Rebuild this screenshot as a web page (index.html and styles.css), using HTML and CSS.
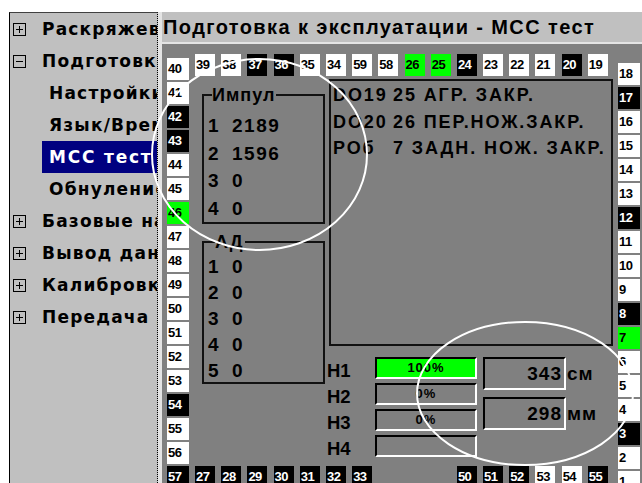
FILE: index.html
```html
<!DOCTYPE html>
<html lang="ru">
<head>
<meta charset="utf-8">
<title>Подготовка к эксплуатации - МСС тест</title>
<link rel="stylesheet" href="styles.css">
</head>
<body>
<div class="app">
  <nav class="tree">
    <div class="node"><svg class="tog" viewBox="0 0 13 13"><rect x=".5" y=".5" width="12" height="12" fill="none" stroke="#000"/><rect x="3" y="6" width="7" height="1"/><rect x="6" y="3" width="1" height="7"/></svg><span class="lbl">Раскряжевка</span></div>
    <div class="node"><svg class="tog" viewBox="0 0 13 13"><rect x=".5" y=".5" width="12" height="12" fill="none" stroke="#000"/><rect x="3" y="6" width="7" height="1"/></svg><span class="lbl">Подготовка к эксплуатации</span></div>
    <div class="node sub"><span class="lbl">Настройки</span></div>
    <div class="node sub"><span class="lbl">Язык/Время</span></div>
    <div class="node sub sel"><span class="lbl">МСС тест</span></div>
    <div class="node sub"><span class="lbl">Обнуление</span></div>
    <div class="node"><svg class="tog" viewBox="0 0 13 13"><rect x=".5" y=".5" width="12" height="12" fill="none" stroke="#000"/><rect x="3" y="6" width="7" height="1"/><rect x="6" y="3" width="1" height="7"/></svg><span class="lbl">Базовые настройки</span></div>
    <div class="node"><svg class="tog" viewBox="0 0 13 13"><rect x=".5" y=".5" width="12" height="12" fill="none" stroke="#000"/><rect x="3" y="6" width="7" height="1"/><rect x="6" y="3" width="1" height="7"/></svg><span class="lbl">Вывод данных</span></div>
    <div class="node"><svg class="tog" viewBox="0 0 13 13"><rect x=".5" y=".5" width="12" height="12" fill="none" stroke="#000"/><rect x="3" y="6" width="7" height="1"/><rect x="6" y="3" width="1" height="7"/></svg><span class="lbl">Калибровка</span></div>
    <div class="node"><svg class="tog" viewBox="0 0 13 13"><rect x=".5" y=".5" width="12" height="12" fill="none" stroke="#000"/><rect x="3" y="6" width="7" height="1"/><rect x="6" y="3" width="1" height="7"/></svg><span class="lbl">Передача данных</span></div>
  </nav>
  <div class="split"></div>
  <main class="main">
    <header class="title">Подготовка к эксплуатации - МСС тест</header>
    <section class="screen">
      <div class="col col-left">
        <span class="t">40</span><span class="t">41</span><span class="t k">42</span><span class="t k">43</span><span class="t">44</span><span class="t">45</span><span class="t g">46</span><span class="t">47</span><span class="t">48</span><span class="t">49</span><span class="t">50</span><span class="t">51</span><span class="t">52</span><span class="t">53</span><span class="t k">54</span><span class="t">55</span><span class="t">56</span><span class="t k">57</span>
      </div>
      <div class="mid">
        <div class="row row-top">
          <span class="t">39</span><span class="t">38</span><span class="t k">37</span><span class="t k">36</span><span class="t">35</span><span class="t">34</span><span class="t">59</span><span class="t">58</span><span class="t g">26</span><span class="t g">25</span><span class="t k">24</span><span class="t">23</span><span class="t">22</span><span class="t">21</span><span class="t k">20</span><span class="t">19</span>
        </div>
        <div class="body">
          <div class="groups">
            <fieldset class="grp grp-imp">
              <legend>Импул</legend>
              <div class="val"><span>1</span><span>2189</span></div>
              <div class="val"><span>2</span><span>1596</span></div>
              <div class="val"><span>3</span><span>0</span></div>
              <div class="val"><span>4</span><span>0</span></div>
            </fieldset>
            <fieldset class="grp grp-ad">
              <legend>АД</legend>
              <div class="val"><span>1</span><span>0</span></div>
              <div class="val"><span>2</span><span>0</span></div>
              <div class="val"><span>3</span><span>0</span></div>
              <div class="val"><span>4</span><span>0</span></div>
              <div class="val"><span>5</span><span>0</span></div>
            </fieldset>
          </div>
          <div class="side">
            <div class="msgs">
              <div class="msg"><span>DO19</span><span>25 АГР. ЗАКР.</span></div>
              <div class="msg"><span>DO20</span><span>26 ПЕР.НОЖ.ЗАКР.</span></div>
              <div class="msg"><span>РОб</span><span>7 ЗАДН. НОЖ. ЗАКР.</span></div>
            </div>
            <div class="levels">
              <div class="bars">
                <span class="hl">H1</span><span class="bar on">100%</span>
                <span class="hl">H2</span><span class="bar">0%</span>
                <span class="hl">H3</span><span class="bar">0%</span>
                <span class="hl">H4</span><span class="bar"></span>
              </div>
              <div class="reads">
                <div class="read"><span class="box">343</span><span class="unit">см</span></div>
                <div class="read"><span class="box">298</span><span class="unit">мм</span></div>
              </div>
            </div>
          </div>
        </div>
        <div class="row row-bottom">
          <span class="t k">27</span><span class="t k">28</span><span class="t k">29</span><span class="t k">30</span><span class="t k">31</span><span class="t k">32</span><span class="t k">33</span><span class="t k c11">50</span><span class="t k">51</span><span class="t k">52</span><span class="t">53</span><span class="t">54</span><span class="t k">55</span>
        </div>
      </div>
      <div class="col col-right">
        <span class="t">18</span><span class="t k">17</span><span class="t">16</span><span class="t">15</span><span class="t">14</span><span class="t">13</span><span class="t k">12</span><span class="t">11</span><span class="t">10</span><span class="t">9</span><span class="t k">8</span><span class="t g">7</span><span class="t">6</span><span class="t">5</span><span class="t">4</span><span class="t k">3</span><span class="t">2</span><span class="t">1</span>
      </div>
    </section>
  </main>
  <svg class="marks" viewBox="0 0 642 483">
    <ellipse cx="259.5" cy="154.5" rx="107.5" ry="95.5"/>
    <ellipse cx="525" cy="393.5" rx="108" ry="71.5"/>
  </svg>
</div>
</body>
</html>
```

FILE: styles.css
```css
* { box-sizing: border-box; }

html, body {
  margin: 0;
  height: 100%;
  overflow: hidden;
  background: #fff;
}

body {
  font-family: "Liberation Sans", Arial, sans-serif;
  font-weight: bold;
  color: #000;
}

.app {
  position: relative;
  display: flex;
  height: 100vh;
  padding: 12px 0 0 9px;
}

/* navigation tree */
.tree {
  flex: none;
  width: 149px;
  background: #c0c0c0;
  border-left: 1px solid #000;
  border-top: 1px solid #404040;
  border-right: 1px dotted #000;
  overflow: hidden;
}

.node {
  display: flex;
  align-items: center;
  height: 32px;
  white-space: nowrap;
  font-family: "DejaVu Sans", "Liberation Sans", sans-serif;
  font-size: 17px;
  letter-spacing: 1.2px;
}

.tog {
  flex: none;
  width: 13px;
  height: 13px;
  margin: 0 16px 0 3px;
}

.node.sub { padding-left: 32px; }

.node .lbl { display: block; }

.node.sub .lbl {
  padding-left: 7px;
  line-height: 32px;
  flex: 1;
}

.node.sel .lbl {
  background: #000080;
  color: #fff;
  letter-spacing: 1.8px;
}

.split {
  flex: none;
  width: 4px;
  background: #e4e4e4;
}

/* main area */
.main {
  flex: 1;
  display: flex;
  flex-direction: column;
  min-width: 0;
}

.title {
  flex: none;
  height: 32px;
  line-height: 30px;
  padding-left: 1px;
  background: #c0c0c0;
  border-bottom: 2px solid #e4e4e4;
  font-size: 20px;
  letter-spacing: 1.4px;
  white-space: nowrap;
  overflow: hidden;
}

.screen {
  flex: 1;
  display: flex;
  background: #808080;
  padding: 0 2px 0 5px;
  overflow: hidden;
}

/* indicator tiles */
.t {
  display: block;
  width: 22px;
  height: 22px;
  background: #fff;
  color: #000;
  font-size: 13px;
  line-height: 22px;
  padding-left: 1px;
  letter-spacing: -0.5px;
}

.t.k { background: #000; color: #fff; }
.t.g { background: #00ff00; }

.col {
  flex: none;
  display: flex;
  flex-direction: column;
  gap: 2px;
  width: 22px;
}

.col-left { padding-top: 14px; }
.col-right { padding-top: 19px; }

.mid {
  flex: 1;
  display: flex;
  flex-direction: column;
  margin: 0 5px 0 6px;
}

.row {
  display: grid;
  grid-template-columns: repeat(16, 20px);
  justify-content: space-between;
  width: 413px;
}

.row .t { width: 20px; }

.row-top { margin-top: 10px; }
.row-bottom { margin-top: 9px; }
.c11 { grid-column-start: 11; }

.body {
  display: grid;
  grid-template-columns: 123px 1fr;
  column-gap: 4px;
  padding-left: 7px;
  align-items: start;
}

/* group boxes */
.groups {
  display: flex;
  flex-direction: column;
}

.grp {
  margin: 0;
  padding: 0 0 0 4px;
  border: 2px solid #111;
  min-inline-size: 0;
}

.grp legend {
  font-size: 18px;
  line-height: 20px;
  letter-spacing: 1px;
  padding: 0 1px 0 0;
  margin-left: 4px;
}

.grp-imp {
  margin-top: 9px;
  height: 139px;
  padding-top: 7px;
}

.grp-ad {
  margin-top: 8px;
  height: 152px;
  padding-top: 2px;
}

.grp-ad legend { margin-left: 7px; }

.val {
  display: grid;
  grid-template-columns: 24px auto;
  font-size: 19px;
  letter-spacing: 1.5px;
}

.grp-imp .val { line-height: 27.5px; }
.grp-ad .val { line-height: 26px; }

/* message list */
.side { display: flex; flex-direction: column; }

.msgs {
  margin-top: 3px;
  height: 267px;
  border: 2px solid #111;
  padding: 1px 0 0 2px;
}

.msg {
  display: grid;
  grid-template-columns: 60px auto;
  font-size: 18px;
  letter-spacing: 1.9px;
  line-height: 26.5px;
  white-space: nowrap;
}

/* level bars and readings */
.levels {
  display: flex;
  margin: 11px 0 0 -2px;
}

.bars {
  display: grid;
  grid-template-columns: 48px 102px;
  grid-auto-rows: 22px;
  row-gap: 4px;
}

.hl {
  font-size: 18.5px;
  line-height: 22px;
  margin-top: 3px;
}

.bar {
  border: 2px solid;
  border-color: #000 #fff #fff #000;
  font-size: 13px;
  line-height: 18px;
  text-align: center;
  letter-spacing: 1px;
}

.bar.on { background: #00ff00; }

.reads {
  display: flex;
  flex-direction: column;
  gap: 7px;
  margin-left: 6px;
}

.read {
  display: flex;
  align-items: center;
}

.box {
  width: 83px;
  height: 33px;
  border: 2px solid;
  border-color: #000 #fff #fff #000;
  font-size: 19px;
  line-height: 29px;
  text-align: right;
  padding-right: 2px;
  letter-spacing: 1px;
}

.unit {
  font-size: 19px;
  margin-left: 1px;
  letter-spacing: 1px;
}

/* hand-drawn highlight rings */
.marks {
  position: absolute;
  left: 0;
  top: 0;
  width: 642px;
  height: 483px;
  pointer-events: none;
}

.marks ellipse {
  fill: none;
  stroke: #fff;
  stroke-width: 2;
}
```
